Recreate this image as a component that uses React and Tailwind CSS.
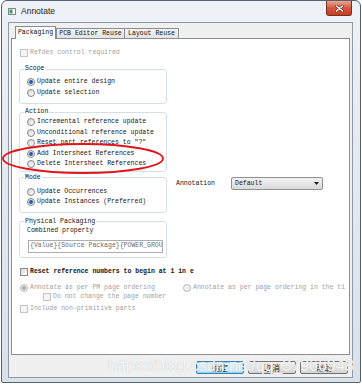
import React from 'react';

const Check = ({ disabled }) => (
  <span
    className={`w-[8px] h-[8px] shrink-0 border ${
      disabled ? 'border-[#c4c4c4] bg-[#f4f4f4]' : 'border-[#8a8a8a] bg-linear-to-br from-[#d9d9d9] to-[#ffffff]'
    }`}
  />
);

const Radio = ({ checked, disabled }) => (
  <span
    className={`w-[8px] h-[8px] shrink-0 rounded-full border flex items-center justify-center ${
      disabled ? 'border-[#b9b9b9] bg-[#f2f2f2]' : 'border-[#868686] bg-linear-to-br from-[#d6d6d6] to-[#ffffff]'
    }`}
  >
    {checked && (
      <span className={`w-[4px] h-[4px] rounded-full ${disabled ? 'bg-[#a9a9a9]' : 'bg-[#1d5cb0]'}`} />
    )}
  </span>
);

const Opt = ({ radio, checked, disabled, bold, h = 'h-[10px]', className = '', children }) => (
  <div className={`flex items-center gap-[2px] ${h} ${className}`}>
    {radio ? <Radio checked={checked} disabled={disabled} /> : <Check disabled={disabled} />}
    <span className={`whitespace-nowrap ${disabled ? 'text-[#a2a2a2]' : 'text-[#161616]'} ${bold ? 'font-bold' : ''}`}>
      {children}
    </span>
  </div>
);

const Group = ({ title, className = '', inner = '', children }) => (
  <fieldset className={`border border-[#d5dfe5] rounded-[3px] ${className}`}>
    <legend className="ml-[4px] px-[1px] leading-[8px] text-[#161616]">{title}</legend>
    <div className={`pl-[7px] ${inner}`}>{children}</div>
  </fieldset>
);

const Button = ({ children, focused }) => (
  <div
    className={`w-[48px] h-[13px] rounded-[2px] border flex items-center justify-center font-['Noto_Sans_CJK_SC',sans-serif] text-[8px] leading-none text-[#1a1a1a] ${
      focused
        ? 'border-[#3c7fb1] bg-linear-to-b from-[#eaf6fd] to-[#bee6fd] shadow-[inset_0_0_0_1px_#8fd3f7]'
        : 'border-[#707070] bg-linear-to-b from-[#f2f2f2] to-[#d4d4d4]'
    }`}
  >
    {children}
  </div>
);

export default function App() {
  return (
    <div className="relative w-[362px] h-[386px] bg-white overflow-hidden font-['Liberation_Mono',monospace] text-[6.5px] text-[#161616]">
      <div className="ml-[1px] w-[360px] h-[383px] border border-[#56616e] rounded-t-[6px] rounded-b-[2px] bg-linear-to-b from-[#eef1f5] to-[#dae1e9] flex flex-col">
        {/* title bar */}
        <div className="h-[21px] flex items-start shrink-0">
          <svg className="ml-[6px] mt-[7px]" width="8" height="7" viewBox="0 0 8 7">
            <rect x="0.5" y="0.5" width="7" height="6" fill="#ffffff" stroke="#7d8894" />
            <rect x="1.5" y="1.5" width="3" height="4" fill="#3aa35a" />
          </svg>
          <span className="ml-[5px] h-[21px] flex items-center font-['Liberation_Sans',sans-serif] text-[8.5px] text-[#1e1e1e]">
            Annotate
          </span>
          <div className="ml-auto mr-[8px] w-[26px] h-[15px] rounded-b-[3px] border border-t-0 border-[#7a2d1f] bg-linear-to-b from-[#eaa695] via-[#d1573f] to-[#c53d25] flex items-center justify-center">
            <svg width="9" height="7" viewBox="0 0 9 7">
              <path d="M1.5 1 L7.5 6 M7.5 1 L1.5 6" stroke="#5a1d12" strokeWidth="2.4" strokeLinecap="round" />
              <path d="M1.5 1 L7.5 6 M7.5 1 L1.5 6" stroke="#ffffff" strokeWidth="1.5" strokeLinecap="round" />
            </svg>
          </div>
        </div>

        {/* client */}
        <div className="ml-[6px] w-[345px] h-[356px] border border-[#8e9aa8] bg-[#f0f0f0] flex flex-col px-[2px] pt-[3px]">
          {/* tabs */}
          <div className="flex items-end h-[12px] pl-[4px] relative z-10">
            <div className="w-[41px] h-[13px] -mb-px border border-b-0 border-[#898c95] bg-white flex items-center justify-center text-[#111]">
              Packaging
            </div>
            <div className="w-[69px] h-[10px] border border-b-0 border-[#898c95] bg-linear-to-b from-[#f4f4f4] to-[#e3e3e3] flex items-center justify-center text-[#111]">
              PCB Editor Reuse
            </div>
            <div className="w-[54px] h-[10px] border border-b-0 border-l-0 border-[#898c95] bg-linear-to-b from-[#f4f4f4] to-[#e3e3e3] flex items-center justify-center text-[#111]">
              Layout Reuse
            </div>
          </div>

          {/* panel */}
          <div className="w-[339px] h-[317px] border border-[#898c95] bg-white pl-[7px] pt-[9px] flex flex-col">
            <Opt disabled className="ml-[1px]">Refdes control required</Opt>

            <div className="flex items-start mt-[7px]">
              <div className="w-[148px] flex flex-col">
                <Group title="Scope" inner="pt-[3px] pb-[5px]">
                  <Opt radio checked h="h-[11px]">Update entire design</Opt>
                  <Opt radio h="h-[11px]">Update selection</Opt>
                </Group>
                <Group title="Action" className="mt-[4px]" inner="pt-[1px] pb-[1px]">
                  <Opt radio h="h-[10.5px]">Incremental reference update</Opt>
                  <Opt radio h="h-[10.5px]">Unconditional reference update</Opt>
                  <Opt radio h="h-[10.5px]">Reset part references to "?"</Opt>
                  <Opt radio checked h="h-[10.5px]">Add Intersheet References</Opt>
                  <Opt radio h="h-[10.5px]">Delete Intersheet References</Opt>
                </Group>
                <Group title="Mode" className="mt-[2px]" inner="pt-[5px] pb-[5px]">
                  <Opt radio>Update Occurrences</Opt>
                  <Opt radio checked>Update Instances (Preferred)</Opt>
                </Group>
                <Group title="Physical Packaging" className="mt-[5px]" inner="pb-[4px]">
                  <div className="h-[10px] flex items-center">Combined property</div>
                  <div className="mt-[4px] ml-[1px] w-[135px] h-[13px] border border-[#abadb3] bg-white pl-[1px] flex items-center overflow-hidden whitespace-nowrap text-[#6d6d6d]">
                    {'{Value}{Source Package}{POWER_GROU'}
                  </div>
                </Group>
              </div>

              <div className="pl-[9px] pt-[112px]">
                <div className="h-[13px] flex items-center">
                  <span className="w-[55px]">Annotation</span>
                  <div className="w-[92px] h-[13px] rounded-[2px] border border-[#8e8f8f] bg-linear-to-b from-[#f3f3f3] to-[#dadada] pl-[3px] pr-[3px] flex items-center justify-between">
                    <span>Default</span>
                    <svg width="5" height="3" viewBox="0 0 5 3">
                      <path d="M0 0 H5 L2.5 3 Z" fill="#1a1a1a" />
                    </svg>
                  </div>
                </div>
              </div>
            </div>

            <Opt bold className="ml-[1px] mt-[9px]">Reset reference numbers to begin at 1 in e</Opt>
            <div className="flex items-center h-[10px] mt-[6px] ml-[1px]">
              <div className="w-[163px]">
                <Opt radio checked disabled>Annotate as per PM page ordering</Opt>
              </div>
              <Opt radio disabled>Annotate as per page ordering in the ti</Opt>
            </div>
            <Opt disabled h="h-[9px]" className="ml-[24px]">Do not change the page number</Opt>
            <Opt disabled className="ml-[1px] mt-[2px]">Include non-primitive parts</Opt>
          </div>

          {/* buttons */}
          <div className="mt-[6px] flex justify-end gap-[4px] pr-[2px]">
            <Button focused>确定</Button>
            <Button>取消</Button>
            <Button>帮助</Button>
          </div>
        </div>
      </div>

      {/* red annotation ellipse */}
      <svg className="absolute inset-0 pointer-events-none" width="362" height="386">
        <ellipse cx="83" cy="158.5" rx="80" ry="14.5" fill="none" stroke="#e3141c" strokeWidth="1.8" />
      </svg>

      {/* watermark */}
      <div className="absolute left-[108px] top-[357px] pointer-events-none whitespace-nowrap font-['Liberation_Sans',sans-serif] text-[16px] leading-[18px] text-[#ffffff]/85 [text-shadow:0_0_1px_#b8b8b8]">
        https://blog.csdn.net/qq_37966948
      </div>
    </div>
  );
}
